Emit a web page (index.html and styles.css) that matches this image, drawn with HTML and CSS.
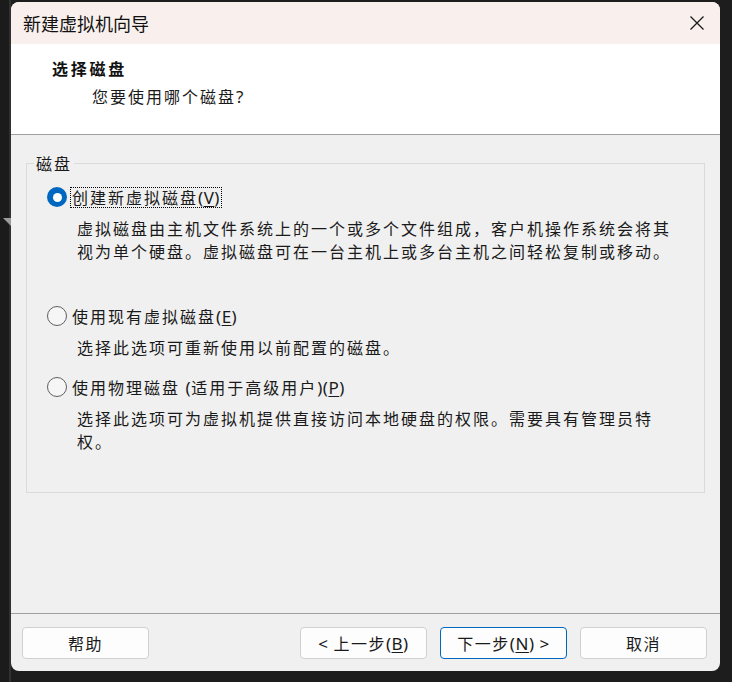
FILE: index.html
```html
<!DOCTYPE html>
<html lang="zh-CN">
<head>
<meta charset="utf-8">
<title>新建虚拟机向导</title>
<link rel="stylesheet" href="styles.css">
</head>
<body>
<div class="desktop">
  <span class="bg-tri"></span>
  <div class="window">
    <div class="titlebar">
      <span class="title">新建虚拟机向导</span>
      <span class="close" aria-label="关闭">
        <svg width="14" height="14" viewBox="0 0 14 14"><path d="M0.5 0.5 L13.5 13.5 M13.5 0.5 L0.5 13.5" stroke="#1a1a1a" stroke-width="1.3" fill="none"/></svg>
      </span>
    </div>
    <div class="header">
      <div class="h-title">选择磁盘</div>
      <div class="h-sub">您要使用哪个磁盘<span class="lat">?</span></div>
    </div>
    <div class="content">
      <fieldset class="group">
        <legend>磁盘</legend>
        <div class="option">
          <div class="radio-row"><span class="radio checked"></span><span class="label focus">创建新虚拟磁盘<span class="lat">(<u>V</u>)</span></span></div>
          <p class="desc tall">虚拟磁盘由主机文件系统上的一个或多个文件组成，客户机操作系统会将其视为单个硬盘。虚拟磁盘可在一台主机上或多台主机之间轻松复制或移动。</p>
        </div>
        <div class="option">
          <div class="radio-row"><span class="radio"></span><span class="label">使用现有虚拟磁盘<span class="lat">(<u>E</u>)</span></span></div>
          <p class="desc">选择此选项可重新使用以前配置的磁盘。</p>
        </div>
        <div class="option last">
          <div class="radio-row"><span class="radio"></span><span class="label">使用物理磁盘 <span class="lat">(</span>适用于高级用户<span class="lat">)(<u>P</u>)</span></span></div>
          <p class="desc">选择此选项可为虚拟机提供直接访问本地硬盘的权限。需要具有管理员特权。</p>
        </div>
      </fieldset>
    </div>
    <div class="footer">
      <button class="btn"><span>帮助</span></button>
      <span class="spacer"></span>
      <button class="btn"><span><span class="lat">&lt;&nbsp;</span>上一步<span class="lat">(<u>B</u>)</span></span></button>
      <button class="btn default"><span>下一步<span class="lat">(<u>N</u>)&nbsp;&gt;</span></span></button>
      <button class="btn"><span>取消</span></button>
    </div>
  </div>
</div>
</body>
</html>
```

FILE: styles.css
```css
* { box-sizing: border-box; }
html, body { margin: 0; padding: 0; }
body {
  width: 732px;
  height: 682px;
  overflow: hidden;
  background:
    linear-gradient(to right, #1b1b1b 0, #1b1b1b 9px, #303030 9px, #303030 11px, transparent 11px),
    #1d1d1d;
  font-family: "Noto Sans CJK SC", "Noto Sans", sans-serif;
  color: #1a1a1a;
}
.desktop {
  position: relative;
  width: 732px;
  height: 682px;
  padding: 2px 12px 0 11px;
}
.bg-tri {
  position: absolute;
  left: 3px;
  top: 218px;
  width: 8px;
  height: 8px;
  background: #9c9c9c;
  clip-path: polygon(0 0, 100% 0, 100% 100%);
}
.window {
  width: 709px;
  height: 669px;
  border-radius: 8px;
  background: #f0f0f0;
  overflow: hidden;
  display: flex;
  flex-direction: column;
}
.lat { font-family: "Noto Sans", "Liberation Sans", sans-serif; font-size: 17px; letter-spacing: 0.5px; }
u { text-underline-offset: 2px; text-decoration-thickness: 1px; }

.titlebar {
  height: 42px;
  flex: none;
  background: #f9f0ed;
  display: flex;
  align-items: center;
  padding: 0 16px 0 12px;
}
.title { font-size: 18px; line-height: 24px; color: #111; }
.close { margin-left: auto; display: flex; }

.header {
  height: 91px;
  flex: none;
  background: #fff;
  border-bottom: 1px solid #a0a0a0;
  padding: 14px 0 0 41px;
}
.h-title { font-size: 16px; line-height: 20px; font-weight: 700; letter-spacing: 2.75px; color: #111; }
.h-sub { font-size: 16px; line-height: 20px; letter-spacing: 2px; margin: 8px 0 0 40px; color: #1a1a1a; }

.content {
  flex: 1;
  padding: 18px 15px 0 15px;
}
.group {
  margin: 0;
  border: 1px solid #dadada;
  padding: 14px 0 39px 7px;
  min-width: 0;
}
.group legend {
  padding: 0 2px;
  font-size: 16px;
  line-height: 20px;
  letter-spacing: 2px;
}
.option { padding-left: 13px; margin-bottom: 18px; }
.option.last { margin-bottom: 0; }
.radio-row { display: flex; align-items: center; height: 20px; }
.radio {
  width: 20px;
  height: 20px;
  flex: none;
  border-radius: 50%;
  border: 1.3px solid #5f5f5f;
  background: #f6f6f6;
  display: grid;
  place-items: center;
}
.radio.checked { border: none; background: #0067c0; }
.radio.checked::after {
  content: "";
  width: 9px;
  height: 9px;
  border-radius: 50%;
  background: #fff;
}
.label {
  margin-left: 3px;
  padding: 0 1px;
  border: 1px solid transparent;
  font-size: 16px;
  line-height: 19px;
  letter-spacing: 2px;
  white-space: nowrap;
}
.label.focus { border: 1px dotted #000; }
.desc {
  margin: 10px 0 0 30px;
  font-size: 16px;
  line-height: 23px;
  letter-spacing: 2px;
  width: 600px;
}
.desc.tall { min-height: 71px; }

.footer {
  height: 58px;
  flex: none;
  border-top: 1px solid #a0a0a0;
  display: flex;
  align-items: flex-start;
  gap: 13px;
  padding: 13px 13px 0 11px;
}
.spacer { flex: 1; }
.btn {
  width: 127px;
  height: 32px;
  border: 1px solid #d0d0d0;
  border-radius: 4px;
  background: #fdfdfd;
  font-family: "Noto Sans CJK SC", "Noto Sans", sans-serif;
  font-size: 16px;
  line-height: 20px;
  letter-spacing: 1.5px;
  color: #1a1a1a;
  padding: 0;
  display: flex;
  align-items: center;
  justify-content: center;
}
.btn .lat { font-size: 17px; letter-spacing: 0.5px; }
.btn.default { border-color: #0067c0; }
```
